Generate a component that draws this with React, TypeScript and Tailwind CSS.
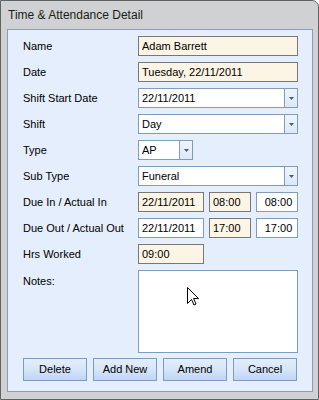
import React from "react";

const font = { fontFamily: '"Liberation Sans", Arial, sans-serif' };

function Box({
  value,
  beige,
  className = "",
}: {
  value?: string;
  beige?: boolean;
  className?: string;
}) {
  return (
    <div
      className={
        "h-[20px] flex items-center pl-[3px] text-[11px] text-black whitespace-nowrap overflow-hidden border " +
        (beige ? "bg-[#fcf4e5] border-[#787878] " : "bg-white border-[#7f9db9] ") +
        className
      }
    >
      {value}
    </div>
  );
}

function Combo({ value, className = "" }: { value: string; className?: string }) {
  return (
    <div
      className={
        "h-[20px] flex border border-[#7f9db9] bg-white text-[11px] text-black " +
        className
      }
    >
      <div className="flex-1 flex items-center pl-[3px] whitespace-nowrap">{value}</div>
      <div className="w-[13px] border-l border-[#7f9db9] bg-gradient-to-b from-[#eef4fd] to-[#dde8f8] flex items-center justify-center">
        <svg width="5" height="3" viewBox="0 0 5 3">
          <path d="M0 0H5L2.5 3Z" fill="#4d5a6b" />
        </svg>
      </div>
    </div>
  );
}

function Row({ label, children }: { label: string; children: React.ReactNode }) {
  return (
    <div className="flex h-[20px]">
      <div className="w-[115px] flex items-center text-[11px] text-black">{label}</div>
      <div className="w-[160px] flex">{children}</div>
    </div>
  );
}

function Btn({ label }: { label: string }) {
  return (
    <button className="w-[64px] h-[23px] border border-[#7b9bc4] bg-gradient-to-b from-[#e4eefc] via-[#d6e5f8] to-[#c0d5f1] text-[11px] text-black">
      {label}
    </button>
  );
}

export default function App() {
  return (
    <div className="w-[319px] h-[400px] bg-white" style={font}>
      <div className="relative h-full border border-[#626262] rounded-tr-[7px] bg-[#d0d1d2] flex flex-col">
        <div className="h-[28px] pl-[7px] flex items-center text-[12px] text-[#1c1c1c]">
          Time &amp; Attendance Detail
        </div>
        <div className="flex-1 ml-[6px] mr-[5px] mb-[7px] border border-[#8d9cb0] bg-[#e4eefc] pt-[6px] pl-[15px] flex flex-col gap-[6px]">
          <Row label="Name">
            <Box value="Adam Barrett" beige className="w-full" />
          </Row>
          <Row label="Date">
            <Box value="Tuesday, 22/11/2011" beige className="w-full" />
          </Row>
          <Row label="Shift Start Date">
            <Combo value="22/11/2011" className="w-full" />
          </Row>
          <Row label="Shift">
            <Combo value="Day" className="w-full" />
          </Row>
          <Row label="Type">
            <Combo value="AP" className="w-[55px]" />
          </Row>
          <Row label="Sub Type">
            <Combo value="Funeral" className="w-full" />
          </Row>
          <Row label="Due In / Actual In">
            <div className="flex gap-[5px]">
              <Box value="22/11/2011" beige className="w-[66px]" />
              <Box value="08:00" beige className="w-[42px]" />
              <Box value="08:00" className="w-[42px] justify-center pl-0" />
            </div>
          </Row>
          <Row label="Due Out / Actual Out">
            <div className="flex gap-[5px]">
              <Box value="22/11/2011" className="w-[66px]" />
              <Box value="17:00" beige className="w-[42px]" />
              <Box value="17:00" className="w-[42px] justify-center pl-0" />
            </div>
          </Row>
          <Row label="Hrs Worked">
            <Box value="09:00" beige className="w-[66px]" />
          </Row>
          <div className="flex">
            <div className="w-[115px] text-[11px] text-black pt-[3px]">Notes:</div>
            <div className="w-[160px] h-[83px] border border-[#7f9db9] bg-white" />
          </div>
          <div className="flex gap-[6px] mt-[-1px]">
            <Btn label="Delete" />
            <Btn label="Add New" />
            <Btn label="Amend" />
            <Btn label="Cancel" />
          </div>
        </div>
        <svg
          className="absolute left-[186px] top-[286px]"
          width="12"
          height="19"
          viewBox="0 0 12 19"
        >
          <path
            d="M0.5 0.5V16.5L4.5 12.5L7 18L9 17L6.5 11.5H11.5Z"
            fill="white"
            stroke="black"
            strokeWidth="1"
          />
        </svg>
      </div>
    </div>
  );
}
